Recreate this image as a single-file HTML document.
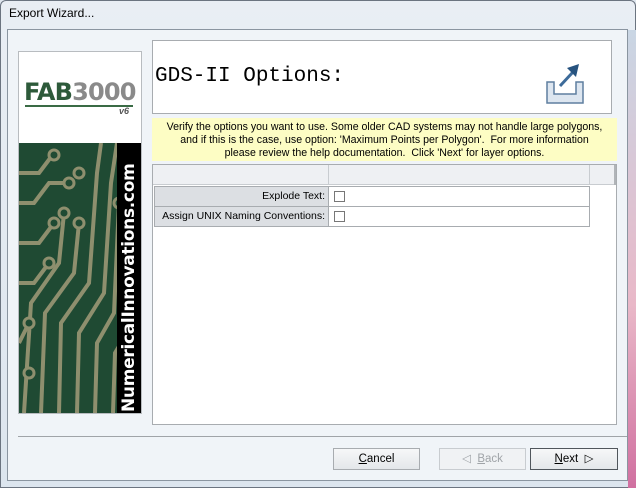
<!DOCTYPE html>
<html><head><style>
*{margin:0;padding:0;box-sizing:border-box}
body{width:636px;height:488px;overflow:hidden;background:#dfe6ee;font-family:"Liberation Sans",sans-serif;font-size:11px;position:relative}
.a{position:absolute}
</style></head><body>
<div class="a" style="left:0;top:0;width:636px;height:488px;background:linear-gradient(#e9eef4,#dce5ee);border:1px solid #6b7480;border-radius:6px 6px 0 0"></div>
<div class="a" style="left:628px;top:30px;width:8px;height:458px;background:linear-gradient(#c9d6e4,#e9b8c8 60%,#d070a0)"></div>
<div class="a" style="left:9px;top:6px;font-size:12px;color:#000">Export Wizard...</div>
<div class="a" style="left:7px;top:29px;width:621px;height:452px;background:#f0f4f8;border:1px solid #8a95a0"></div>
<!-- left panel -->
<div class="a" style="left:18px;top:51px;width:124px;height:363px;border:1px solid #b8bcc0;background:#fff"></div>
<div class="a" style="left:24px;top:78px;font:bold 24px 'DejaVu Sans',sans-serif;color:#2d5a3a;letter-spacing:-0.8px">FAB<span style="color:#8a8a8a">3000</span></div>
<div class="a" style="left:25px;top:105px;width:108px;height:2px;background:#3a6b45"></div>
<div class="a" style="left:119px;top:106px;font:italic bold 9px sans-serif;color:#555">v6</div>
<svg class="a" style="left:19px;top:143px" width="122" height="270" viewBox="0 0 122 270">
<rect width="122" height="270" fill="#1f4a33"/>
<g stroke="#8e8f6e" stroke-width="4" fill="none">
<path d="M5 270 L12 160 L40 120 L45 70"/><path d="M22 270 L26 170 L55 130 L60 80"/><path d="M40 270 L42 180 L70 140 L78 30 L82 0"/><path d="M58 270 L60 190 L85 150 L92 40 L98 0"/><path d="M76 270 L78 200 L95 170 L100 60"/><path d="M94 270 L96 210 L108 190 L110 90"/>
<path d="M0 30 L20 30 L35 10"/><path d="M0 60 L15 60 L30 40 L50 40"/><path d="M0 100 L20 100 L35 80"/><path d="M0 140 L15 140 L30 120"/><path d="M0 200 L10 180"/>
</g>
<g fill="#1f4a33" stroke="#8e8f6e" stroke-width="3">
<circle cx="35" cy="12" r="5"/><circle cx="50" cy="40" r="5"/><circle cx="35" cy="80" r="5"/><circle cx="45" cy="70" r="5"/><circle cx="60" cy="80" r="5"/><circle cx="100" cy="60" r="5"/><circle cx="110" cy="90" r="5"/><circle cx="30" cy="120" r="5"/><circle cx="10" cy="180" r="5"/><circle cx="60" cy="30" r="5"/><circle cx="10" cy="230" r="5"/>
</g>
<rect x="98" y="0" width="24" height="270" fill="#000"/>
</svg>
<div class="a" style="left:118px;top:412px;width:22px;height:270px;transform-origin:0 0;transform:rotate(-90deg);color:#fff;font:bold 17px 'DejaVu Sans',sans-serif;line-height:22px;text-align:center;white-space:nowrap;letter-spacing:-0.3px">NumericalInnovations.com</div>
<!-- header -->
<div class="a" style="left:152px;top:40px;width:460px;height:74px;background:#fff;border:1px solid #a8acb0"></div>
<div class="a" style="left:155px;top:65px;font:21px 'Liberation Mono',monospace;color:#000">GDS-II Options:</div>
<svg class="a" style="left:545px;top:62px" width="40" height="42" viewBox="0 0 40 42">
<path d="M2 20 h7 v12 h22 v-12 h7 v21 h-36z" fill="#dde6f0" stroke="#5e7f9f" stroke-width="1.5"/>
<path d="M15 24 L28 10" stroke="#3d6b9a" stroke-width="3"/>
<path d="M22 6 L34 2 L31 15z" fill="#27537f"/>
</svg>
<!-- note -->
<div class="a" style="left:152px;top:118px;width:465px;height:43px;background:#fdfdc4;text-align:center;line-height:13px;padding-top:3px;color:#000;font-size:10.6px">Verify the options you want to use. Some older CAD systems may not handle large polygons,<br>and if this is the case, use option: 'Maximum Points per Polygon'.&nbsp; For more information<br>please review the help documentation.&nbsp; Click 'Next' for layer options.</div>
<!-- grid -->
<div class="a" style="left:152px;top:164px;width:465px;height:261px;background:#fff;border:1px solid #a8acb0"></div>
<div class="a" style="left:153px;top:165px;width:463px;height:20px;background:#eef0f3;border-bottom:1px solid #c8ccd0"></div>
<div class="a" style="left:328px;top:165px;width:1px;height:20px;background:#c8ccd0"></div>
<div class="a" style="left:589px;top:165px;width:1px;height:20px;background:#c8ccd0"></div>
<div class="a" style="left:614px;top:165px;width:2px;height:20px;background:#b0b4b8"></div>
<div class="a" style="left:154px;top:186px;width:436px;height:41px;border:1px solid #a8acb0;background:#fff"></div>
<div class="a" style="left:155px;top:187px;width:173px;height:39px;background:#dcdfe3"></div>
<div class="a" style="left:328px;top:187px;width:1px;height:39px;background:#a8acb0"></div>
<div class="a" style="left:155px;top:206px;width:434px;height:1px;background:#a8acb0"></div>
<div class="a" style="left:155px;top:190px;width:170px;text-align:right;white-space:nowrap;font-size:10.5px">Explode Text:</div>
<div class="a" style="left:155px;top:210px;width:170px;text-align:right;white-space:nowrap;font-size:10.5px">Assign UNIX Naming Conventions:</div>
<div class="a" style="left:334px;top:191px;width:11px;height:11px;border:1px solid #777;background:#fff"></div>
<div class="a" style="left:334px;top:211px;width:11px;height:11px;border:1px solid #777;background:#fff"></div>
<!-- separator -->
<div class="a" style="left:18px;top:436px;width:609px;height:1px;background:#a0a4a8"></div>
<!-- buttons -->
<div class="a" style="left:333px;top:448px;width:87px;height:22px;border:1px solid #a8acb0;background:linear-gradient(#f6f7f8,#e4e7ea);text-align:center;line-height:20px;font-size:11.5px"><u>C</u>ancel</div>
<div class="a" style="left:439px;top:448px;width:87px;height:22px;border:1px solid #c8ccd0;background:#f0f2f4;text-align:center;line-height:20px;font-size:11.5px;color:#a0a4a8">&#9665;&nbsp; <u>B</u>ack</div>
<div class="a" style="left:530px;top:448px;width:88px;height:22px;border:1px solid #50565c;background:linear-gradient(#f6f7f8,#e4e7ea);text-align:center;line-height:20px;font-size:11.5px"><u>N</u>ext&nbsp; &#9655;</div>
</body></html>
